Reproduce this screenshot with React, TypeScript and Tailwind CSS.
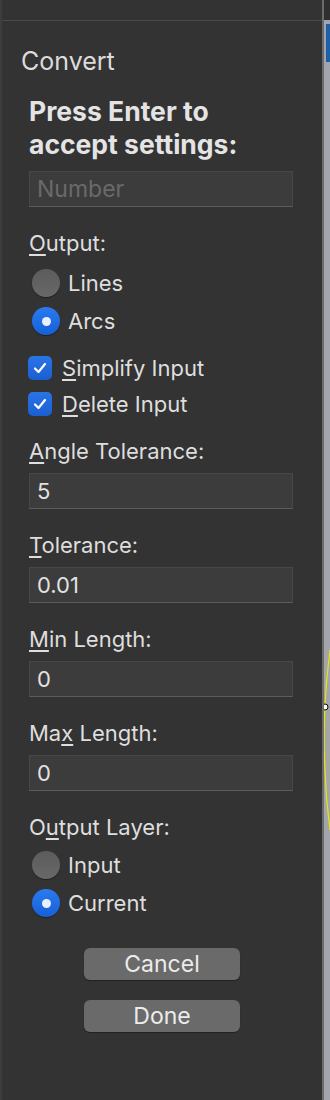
import React from 'react';

const font = { fontFamily: 'Inter, "Noto Sans", sans-serif' };

function U({ children }: { children: React.ReactNode }) {
  return <span className="underline decoration-[1.5px] underline-offset-[3px]">{children}</span>;
}

function Radio({ checked, label }: { checked?: boolean; label: string }) {
  return (
    <div className="flex h-[38px] items-center">
      {checked ? (
        <span className="ml-[3px] flex h-[28px] w-[28px] items-center justify-center rounded-full bg-gradient-to-b from-[#2a7af0] to-[#1660d8] shadow-[0_1px_1px_rgba(0,0,0,0.4)]">
          <span className="h-[9px] w-[9px] rounded-full bg-[#e8f0ff]"></span>
        </span>
      ) : (
        <span className="ml-[3px] h-[28px] w-[28px] rounded-full bg-gradient-to-b from-[#5c5c5c] to-[#686868] shadow-[0_1px_1px_rgba(0,0,0,0.4)]"></span>
      )}
      <span className="ml-[8px] text-[22px] leading-[28px] text-[#dedede]">{label}</span>
    </div>
  );
}

function Check({ label }: { label: React.ReactNode }) {
  return (
    <div className="flex h-[36px] items-center">
      <span className="-ml-[1px] flex h-[24px] w-[24px] items-center justify-center rounded-[5px] bg-gradient-to-b from-[#2a74e8] to-[#1a5fd0]">
        <svg width="16" height="16" viewBox="0 0 16 16" fill="none">
          <path d="M3 8.5 L6.5 12 L13 4" stroke="#ffffff" strokeWidth="2.2" strokeLinecap="round" strokeLinejoin="round" />
        </svg>
      </span>
      <span className="ml-[10px] text-[22px] leading-[28px] text-[#dedede]">{label}</span>
    </div>
  );
}

function Field({ label, value, placeholder }: { label?: React.ReactNode; value?: string; placeholder?: string }) {
  return (
    <div className="flex flex-col">
      {label && <div className="h-[28px] text-[22px] leading-[28px] text-[#dedede]">{label}</div>}
      <div className={`${label ? 'mt-[8px]' : ''} flex h-[36px] w-[264px] items-center border border-[#474747] border-b-[#5c5c5c] bg-[#3c3c3c] pl-[7px] text-[22px]`}>
        {value ? <span className="text-[#e2e2e2]">{value}</span> : <span className="text-[23px] text-[#6a6a6a]">{placeholder}</span>}
      </div>
    </div>
  );
}

function Button({ children }: { children: React.ReactNode }) {
  return (
    <div className="flex h-[32px] w-[156px] items-center justify-center rounded-[6px] bg-[#6a6a6a] text-[23px] leading-none text-[#ececec] shadow-[0_1px_1px_rgba(0,0,0,0.35)]">
      {children}
    </div>
  );
}

export default function App() {
  return (
    <div className="flex h-[1100px] w-[330px] bg-[#333333]" style={font}>
      <div className="flex w-[322px] flex-col border-l-2 border-[#3d3d3d]">
        <div className="h-[21px] border-b border-[#4a4a4a]"></div>
        <div className="ml-[19px] mt-[25px] text-[25px] leading-[30px] text-[#dcdcdc]">Convert</div>
        <div className="ml-[27px] mt-[19px] flex flex-col">
          <div className="text-[26.5px] font-bold leading-[33px] text-[#e4e4e4]">
            Press Enter to
            <br />
            accept settings:
          </div>
          <div className="mt-[10px]">
            <Field placeholder="Number" />
          </div>
          <div className="mt-[22px] h-[28px] text-[22px] leading-[28px] text-[#dedede]">
            <U>O</U>utput:
          </div>
          <div className="mt-[7px]">
            <Radio label="Lines" />
            <Radio label="Arcs" checked />
          </div>
          <div className="mt-[10px]">
            <Check label={<><U>S</U>implify Input</>} />
            <Check label={<><U>D</U>elete Input</>} />
          </div>
          <div className="mt-[15px] flex flex-col gap-[22px]">
            <Field label={<><U>A</U>ngle Tolerance:</>} value="5" />
            <Field label={<><U>T</U>olerance:</>} value="0.01" />
            <Field label={<><U>M</U>in Length:</>} value="0" />
            <Field label={<>Ma<U>x</U> Length:</>} value="0" />
          </div>
          <div className="mt-[22px] h-[28px] text-[22px] leading-[28px] text-[#dedede]">
            O<U>u</U>tput Layer:
          </div>
          <div className="mt-[5px]">
            <Radio label="Input" />
            <Radio label="Current" checked />
          </div>
        </div>
        <div className="mt-[26px] flex flex-col items-center gap-[20px]">
          <Button>Cancel</Button>
          <Button>Done</Button>
        </div>
      </div>
      <div className="flex flex-1 flex-col border-l-2 border-[#6c6c6c]">
        <div className="h-[20px] bg-[#2f2f2f]"></div>
        <div className="relative flex-1 bg-[#a2a6ac]">
          <div className="ml-[2px] mt-[4px] h-[38px] bg-[#1d5fa8]"></div>
          <svg className="absolute left-0 top-[630px]" width="6" height="180" viewBox="0 0 6 180">
            <path d="M6 0 Q-2 60 1 120 Q2 150 6 180" stroke="#e8e800" strokeWidth="1.2" fill="none" />
            <circle cx="1" cy="57" r="3" fill="#ffffff" stroke="#000000" strokeWidth="1" />
          </svg>
        </div>
      </div>
    </div>
  );
}
